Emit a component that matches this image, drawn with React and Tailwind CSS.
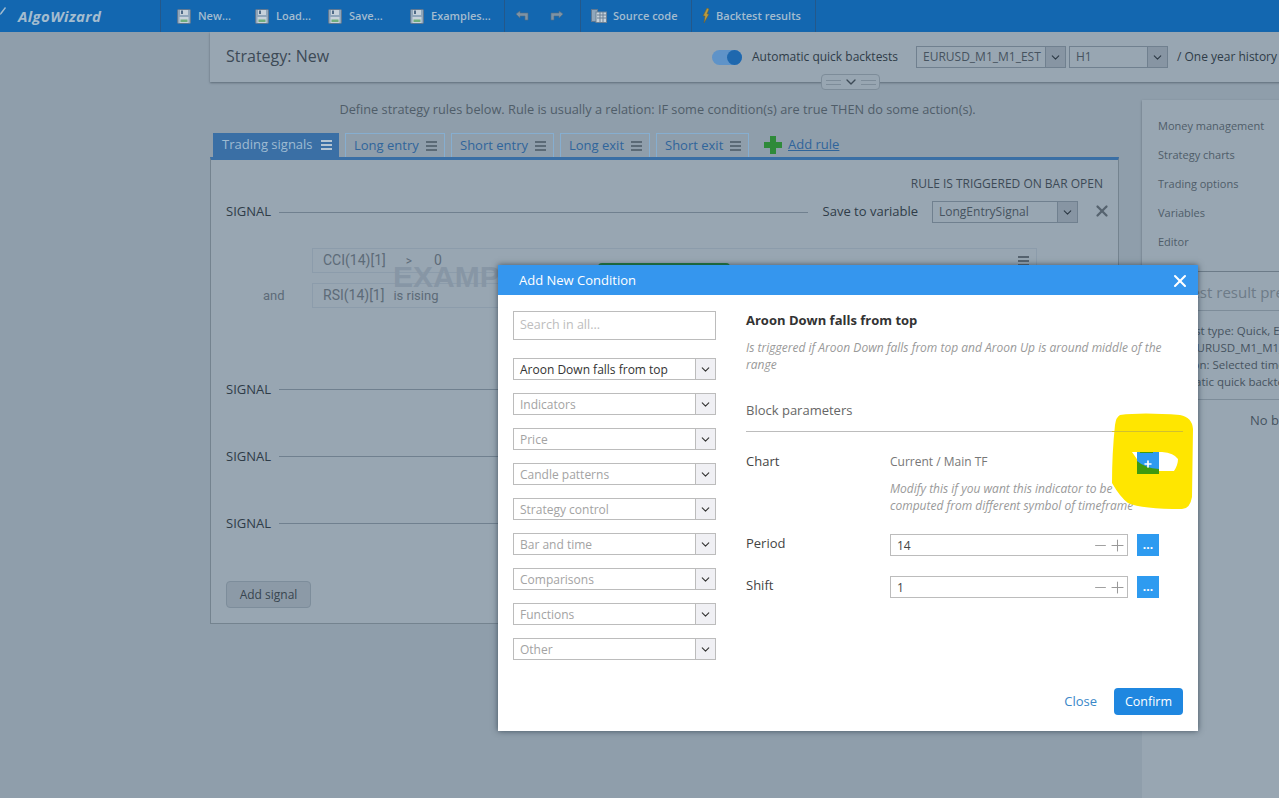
import React from "react";
import { ChevronDown, Minus, Plus, X } from "lucide-react";

const font = "font-['Open_Sans',sans-serif]";

function Floppy() {
  return (
    <svg width="14" height="15" viewBox="0 0 14 15" className="shrink-0">
      <rect x="0.5" y="0.5" width="13" height="14" rx="1" fill="#8fa6bb" stroke="#5f7892" />
      <rect x="3" y="1" width="8" height="5" fill="#c7d2db" />
      <rect x="4" y="1.5" width="2" height="3.5" fill="#4e6a87" />
      <rect x="2.5" y="8" width="9" height="6" fill="#c7d2db" />
      <rect x="3.5" y="10.5" width="7" height="2.5" fill="#6fae7d" />
    </svg>
  );
}

function ToolItem({ label, className }) {
  return (
    <div className={`flex items-center gap-[7px] text-[11px] font-semibold text-[#a3bccf] ${className}`}>
      <Floppy />
      <span>{label}</span>
    </div>
  );
}

function Arrow({ flip }) {
  return (
    <svg width="14" height="12" viewBox="0 0 14 12" className={flip ? "-scale-x-100" : ""}>
      <path d="M1 4 L5 1 V3 H13 V10 H10 V6 H5 V8 Z" fill="#7d93a6" stroke="#566d81" strokeWidth="0.6" />
    </svg>
  );
}

function MenuIcon({ className }) {
  return (
    <svg width="11" height="10" viewBox="0 0 11 10" className={`shrink-0 ${className}`}>
      <path d="M0 1H11M0 5H11M0 9H11" stroke="currentColor" strokeWidth="2" />
    </svg>
  );
}

function Toolbar() {
  return (
    <div className="flex h-8 w-full shrink-0 items-stretch bg-[#1367b0]">
      <div className="flex w-[161px] items-center gap-3 border-r border-[#24588a] text-[15px] font-bold italic tracking-wide text-[#a3bccf]">
        <svg width="6" height="10" viewBox="0 0 6 10" className="-mt-2">
          <path d="M5 0 L6 1 L1.5 7 L0 8 L0.3 6 Z" fill="#a3bccf" />
        </svg>
        AlgoWizard
      </div>
      <div className="flex w-[344px] items-center border-r border-[#24588a] pl-4">
        <ToolItem label="New..." className="w-[78px]" />
        <ToolItem label="Load..." className="w-[73px]" />
        <ToolItem label="Save..." className="w-[82px]" />
        <ToolItem label="Examples..." />
      </div>
      <div className="flex w-[76px] items-center gap-[21px] border-r border-[#24588a] pl-[10px]">
        <Arrow />
        <Arrow flip />
      </div>
      <div className="flex w-[111px] items-center gap-[6px] border-r border-[#24588a] pl-[10px] text-[11px] font-semibold text-[#a3bccf]">
        <svg width="16" height="14" viewBox="0 0 16 14">
          <rect x="0.5" y="0.5" width="6" height="12" fill="#8fa6bb" stroke="#5f7892" />
          <rect x="5" y="3" width="10.5" height="10.5" fill="#c7d2db" stroke="#6b8196" />
          <path d="M6 6H15M6 9H15M9 3V13M12 3V13" stroke="#6b8196" />
        </svg>
        Source code
      </div>
      <div className="flex w-[124px] items-center gap-[6px] border-r border-[#24588a] pl-[10px] text-[11px] font-semibold text-[#a3bccf]">
        <svg width="8" height="16" viewBox="0 0 8 16">
          <path d="M5 0 L7 1 L5 6 L7 6 L2 15 L3 8 L1 8 Z" fill="#b79a3f" stroke="#6c5c2a" strokeWidth="0.5" />
        </svg>
        Backtest results
      </div>
    </div>
  );
}

function DarkSelect({ value, className }) {
  return (
    <div className={`flex h-[22px] items-stretch border border-[#70808f] ${className}`}>
      <span className="flex-1 truncate pl-[6px] text-xs leading-[20px] text-[#46535f]">{value}</span>
      <span className="flex w-5 items-center justify-center border-l border-[#70808f] bg-[#8795a3] text-[#2c3945]">
        <ChevronDown size={13} />
      </span>
    </div>
  );
}

function Tab({ label, active, className = "" }) {
  return (
    <div
      className={`flex h-6 items-center justify-between pr-[7px] text-[13px] ${
        active
          ? "bg-[#3a6fa5] pl-[9px] text-[#9fbbd2]"
          : "border border-b-0 border-[#86aed0] pl-[8px] text-[#2f659b]"
      } ${className}`}
    >
      {label}
      <MenuIcon className={active ? "text-[#b5c6d3]" : "text-[#5b6a76]"} />
    </div>
  );
}

function SignalRow({ className }) {
  return (
    <div className={`flex items-center gap-2 text-[13px] leading-[16px] text-[#2f3c48] ${className}`}>
      <span className="w-[45px]">SIGNAL</span>
      <div className="h-px flex-1 bg-[#70808f]" />
    </div>
  );
}

function CenterPanel() {
  return (
    <div className="flex w-[909px] shrink-0 flex-col">
      <p className="mt-[17px] pr-[14px] text-center text-[12.75px] leading-[20px] text-[#4f5d69]">
        Define strategy rules below. Rule is usually a relation: IF some condition(s) are true THEN do some action(s).
      </p>
      <div className="mt-[14px] flex items-end gap-[6px] pl-[3px]">
        <Tab label="Trading signals" active className="w-[126px]" />
        <Tab label="Long entry" className="w-[100px]" />
        <Tab label="Short entry" className="w-[103px]" />
        <Tab label="Long exit" className="w-[90px]" />
        <Tab label="Short exit" className="w-[93px]" />
        <div className="ml-[9px] flex h-6 items-center gap-[6px] text-[13px] text-[#2f659b]">
          <svg width="18" height="18" viewBox="0 0 18 18">
            <path d="M9 0V18M0 9H18" stroke="#2f8a3a" strokeWidth="6" />
          </svg>
          <span className="underline">Add rule</span>
        </div>
      </div>
      <div className="flex h-[467px] flex-col border border-t-[3px] border-[#74838f] border-t-[#3a6fa5] bg-[#98a6b2] pl-[15px] pr-[7px]">
        <div className="mt-[16px] pr-[8px] text-right text-xs leading-[16px] text-[#3d4a56]">
          RULE IS TRIGGERED ON BAR OPEN
        </div>
        <div className="mt-[9px] flex h-[22px] items-center gap-2 text-[13px] text-[#2f3c48]">
          <span className="w-[45px]">SIGNAL</span>
          <div className="h-px flex-1 bg-[#70808f]" />
          <span className="ml-[7px] mr-[6px]">Save to variable</span>
          <DarkSelect value="LongEntrySignal" className="w-[146px]" />
          <X size={18} strokeWidth={3} className="ml-[7px] -mt-[2px] text-[#56636f]" />
        </div>
        <div className="relative mt-[25px] pl-[86px] font-['Roboto',sans-serif] text-[14px] text-[#5d6b78]">
          <div className="flex h-[25px] w-[725px] items-center border border-[#8c9cab] pl-[10px]">
            <span>CCI(14)[1]</span>
            <span className="ml-[20px] text-xs">&gt;</span>
            <span className="ml-[22px]">0</span>
            <MenuIcon className="ml-auto mr-[7px] text-[#56636f]" />
          </div>
          <div className="absolute left-[372px] top-[15px] h-[10px] w-[132px] rounded-t bg-[#1f7a3d]" />
          <div className="mt-[10px] flex items-center">
            <span className="absolute left-[37px] text-[13px]">and</span>
            <div className="flex h-[25px] w-[725px] items-center border border-[#8c9cab] pl-[10px]">
              <span>RSI(14)[1]</span>
              <span className="ml-[9px] text-[13px]">is rising</span>
            </div>
          </div>
          <span className="absolute left-[167px] top-[12px] font-['Liberation_Sans',sans-serif] text-[30px] font-bold leading-[34px] text-[#8796a5]">
            EXAMPLE
          </span>
        </div>
        <SignalRow className="mt-[73px]" />
        <SignalRow className="mt-[51px]" />
        <SignalRow className="mt-[51px]" />
        <button className="mt-[50px] h-[27px] w-[85px] rounded-sm border border-[#7d8d9b] bg-[#8c9aa7] text-xs text-[#38454f]">
          Add signal
        </button>
      </div>
    </div>
  );
}

function RightColumn() {
  return (
    <div className="ml-[23px] mt-[18px] flex w-[200px] shrink-0 flex-col">
      <div className="flex h-[171px] flex-col gap-[14px] bg-[#98a6b2] pl-4 pt-[18px] text-[11px] leading-[15px] text-[#4f5d69] shadow-[0_1px_2px_#5d6b78]">
        <span>Money management</span>
        <span>Strategy charts</span>
        <span>Trading options</span>
        <span>Variables</span>
        <span>Editor</span>
      </div>
      <div className="mt-px h-[540px] bg-[#98a6b2]">
        <div className="h-[39px] whitespace-nowrap border-b border-[#7d8c99] pl-[11px] pt-[9px] text-[15px] text-[#6d7b88]">
          Backtest result preview
        </div>
        <div className="flex flex-col border-b border-[#7d8c99] pb-[9px] pl-[17px] pt-[11px] text-[11.5px] leading-[17px] text-[#46535f]">
          <span className="whitespace-nowrap">Backtest type: Quick, End</span>
          <span className="whitespace-nowrap">Data: EURUSD_M1_M1_EST</span>
          <span className="whitespace-nowrap">Duration: Selected time</span>
          <span className="whitespace-nowrap">Automatic quick backtests</span>
        </div>
        <div className="whitespace-nowrap pl-[108px] pt-[11px] text-[13px] leading-[18px] text-[#46535f]">No backtest</div>
      </div>
    </div>
  );
}

function ModalSelect({ value, dark }) {
  return (
    <div className="flex h-[22px] items-stretch border border-[#bcbcbc] bg-white">
      <span className={`flex-1 pl-[6px] text-xs leading-[21px] ${dark ? "text-[#333]" : "text-[#a3a3a3]"}`}>{value}</span>
      <span className="flex w-5 items-center justify-center border-l border-[#bcbcbc] bg-[#f0f0f4] text-[#333]">
        <ChevronDown size={13} />
      </span>
    </div>
  );
}

function ParamRow({ label, value, className }) {
  return (
    <div className={`flex items-center ${className}`}>
      <span className="-mt-[2px] w-[144px] text-[13px] text-[#444]">{label}</span>
      <div className="flex h-[22px] w-[238px] items-center border border-[#bcbcbc] pl-[6px] pt-px text-xs text-[#444]">
        {value}
        <Minus size={17} strokeWidth={1.3} className="ml-auto text-[#999]" />
        <Plus size={19} strokeWidth={1.3} className="-ml-[1px] text-[#999]" />
      </div>
      <div className="ml-[9px] flex h-[22px] w-[22px] items-center justify-center bg-[#2e9bf0] text-xs font-bold leading-none text-white">
        ...
      </div>
    </div>
  );
}

function Modal() {
  return (
    <div className={`absolute left-[498px] top-[265px] flex h-[466px] w-[700px] flex-col bg-white shadow-[0_0_6px_rgba(30,45,60,0.7)] ${font}`}>
      <div className="flex h-[30px] shrink-0 items-center justify-between bg-[#3596ee] pl-[21px] pr-[8px] pt-px text-[13px] text-white">
        Add New Condition
        <X size={20} strokeWidth={2.5} />
      </div>
      <div className="flex flex-1">
        <div className="ml-[15px] mt-4 flex w-[203px] flex-col gap-[13px]">
          <div className="mb-[5px] flex h-[29px] items-center border border-[#bcbcbc] pl-[6px] text-[12.5px] text-[#bdbdbd]">
            Search in all...
          </div>
          <ModalSelect value="Aroon Down falls from top" dark />
          <ModalSelect value="Indicators" />
          <ModalSelect value="Price" />
          <ModalSelect value="Candle patterns" />
          <ModalSelect value="Strategy control" />
          <ModalSelect value="Bar and time" />
          <ModalSelect value="Comparisons" />
          <ModalSelect value="Functions" />
          <ModalSelect value="Other" />
        </div>
        <div className="relative ml-[30px] flex w-[437px] flex-col pt-4">
          <h3 className="text-[13px] font-bold leading-[18px] text-[#333]">Aroon Down falls from top</h3>
          <p className="mt-[10px] w-[425px] text-xs italic leading-[17px] text-[#999]">
            Is triggered if Aroon Down falls from top and Aroon Up is around middle of the range
          </p>
          <div className="mt-[27px] border-b border-[#bcbcbc] pb-[11px] text-[13px] leading-[20px] text-[#666]">Block parameters</div>
          <div className="mt-[19px] flex items-start">
            <span className="w-[144px] text-[13px] leading-[20px] text-[#444]">Chart</span>
            <div className="w-[250px]">
              <div className="mt-px text-xs leading-[20px] text-[#777]">Current / Main TF</div>
              <p className="mt-[8px] text-xs italic leading-[17px] text-[#999]">
                Modify this if you want this indicator to be computed from different symbol of timeframe
              </p>
            </div>
          </div>
          <ParamRow label="Period" value="14" className="mt-[20px]" />
          <ParamRow label="Shift" value="1" className="mt-[20px]" />
          <svg width="81" height="96" viewBox="0 0 81 96" className="absolute left-[366px] top-[118px]">
            <path
              fillRule="evenodd"
              fill="#ffe600"
              d="M8 2 Q30 -1 68 2 Q80 4 81 16 L80 84 Q78 96 70 96 Q30 96 16 90 Q8 84 0 70 Q0 40 3 12 Q4 4 8 2 Z M20 39 Q30 55 40 58 L62 58 Q66 52 66 46 Q62 40 50 39 Z"
            />
          </svg>
          <div className="absolute left-[366px] top-[136px] h-px w-[71px] bg-[#d0c030]" />
          <svg width="22" height="22" viewBox="0 0 22 22" className="absolute left-[391px] top-[157px]">
            <rect width="22" height="22" fill="#2e9bf0" />
            <path d="M0 9 Q8 16 22 17 V22 H0 Z M3 0 H16 V1 H3 Z" fill="#3f9a0f" />
          </svg>
          <Plus size={10} strokeWidth={4} className="absolute left-[397px] top-[164px] text-white" />
        </div>
      </div>
      <div className="absolute bottom-[16px] right-[15px] flex items-center gap-[17px]">
        <span className="text-[13px] text-[#3a87c8]">Close</span>
        <button className="h-[27px] w-[69px] rounded-sm bg-[#1f87e0] pt-px text-[12.5px] text-white">Confirm</button>
      </div>
    </div>
  );
}

export default function App() {
  return (
    <div className={`relative flex h-[798px] w-[1279px] flex-col overflow-hidden bg-[#8f9eab] ${font}`}>
      <Toolbar />
      <div className="ml-[210px] flex flex-col">
        <div className="flex h-[50px] w-[1100px] shrink-0 items-center bg-[#98a6b2] pl-4 shadow-[0_1px_2px_#5d6b78]">
          <span className="-mt-[2px] w-[486px] text-[16px] text-[#3d4a56]">Strategy: New</span>
          <span className="relative h-[15px] w-[30px] rounded-full bg-[#5f93c8]">
            <span className="absolute right-0 top-0 h-[15px] w-[15px] rounded-full bg-[#1f68ae]" />
          </span>
          <span className="ml-[10px] w-[164px] text-xs text-[#2f3c48]">Automatic quick backtests</span>
          <DarkSelect value="EURUSD_M1_M1_EST" className="w-[150px]" />
          <DarkSelect value="H1" className="ml-[3px] w-[99px]" />
          <span className="ml-[9px] whitespace-nowrap text-xs text-[#2f3c48]">/ One year history</span>
        </div>
        <div className="absolute left-[821px] top-[74px] flex h-[16px] w-[59px] items-center justify-center gap-[2px] rounded-sm border border-[#7d8c99] bg-[#98a6b2] text-[#3d4a56]">
          <div className="h-[5px] w-[15px] border-y border-[#7d8c99]" />
          <ChevronDown size={16} />
          <div className="h-[5px] w-[15px] border-y border-[#7d8c99]" />
        </div>
        <div className="flex">
          <CenterPanel />
          <RightColumn />
        </div>
      </div>
      <Modal />
    </div>
  );
}
